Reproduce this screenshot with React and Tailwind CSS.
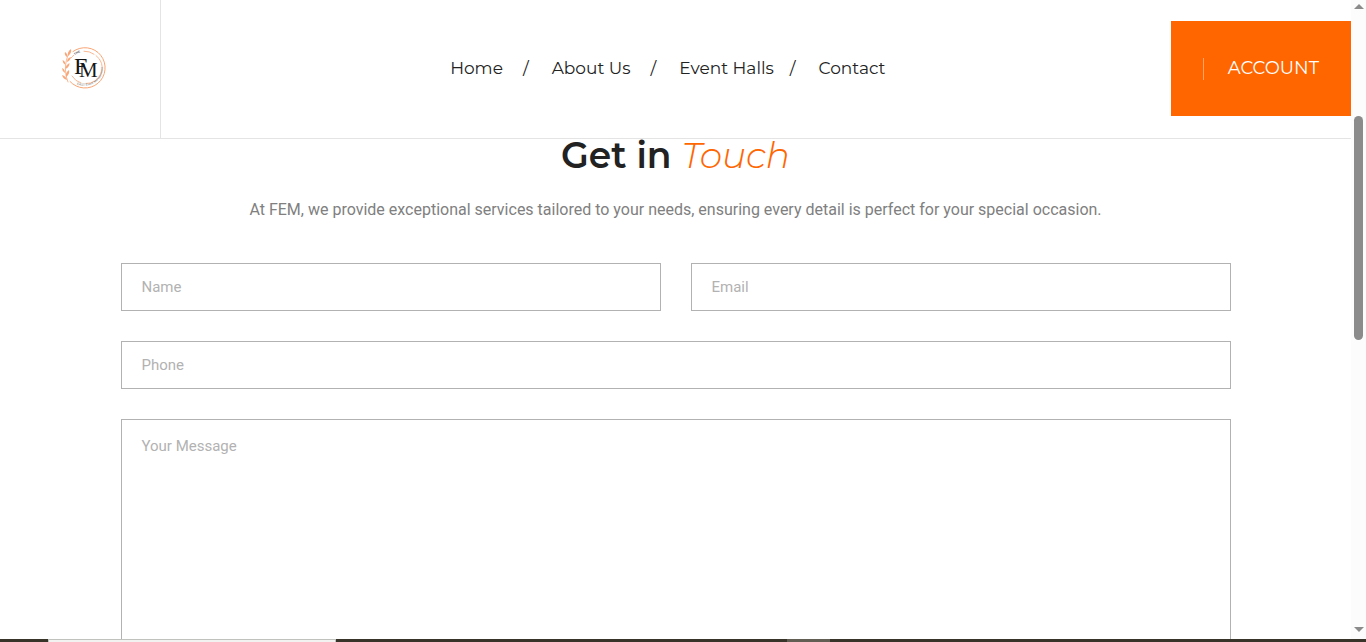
import React from "react";

const navLinks = [
  { label: "Home", href: "#home" },
  { label: "About Us", href: "#about", slash: "ml-5 mr-[23px]" },
  { label: "Event Halls", href: "#halls", slash: "ml-5 mr-[23px]" },
  { label: "Contact", href: "#contact", slash: "ml-4 mr-[23px]" },
];

const fieldClass =
  "block w-full border border-[#b2b2b2] bg-white px-5 text-[15px] text-[#222] placeholder-[#b2b2b2] outline-none focus:border-[#ff6600]";

const Logo = () => (
  <svg viewBox="0 0 48 44" className="w-12 h-11" role="img" aria-label="FEM">
    <defs>
      <path id="ringTop" d="M9 21.500a16.500 16.500 0 0 1 16-16" />
      <path id="ringBottom" d="M15 37.500a18.800 18.800 0 0 0 24-28" />
    </defs>
    <g fill="none" stroke="#f79a63" strokeLinecap="round">
      <path d="M13 5.500a20.200 20.200 0 1 1-3 30" strokeWidth="0.9" />
      <path d="M11 12a16.500 16.500 0 0 1 3-3M24 5.200a16.300 16.300 0 0 1 10 3M36 9.500a15.500 15.500 0 0 1-10 28M21 37a15.500 15.500 0 0 1-9-7" strokeWidth="0.7" />
      <path d="M10 5C6 12 3 24 8 36" strokeWidth="0.7" />
    </g>
    <g fill="#f9a678">
      <path d="M11 3q-4 3-3 7q4-3 3-7zM7 11q-3-2-2-5q3 2 2 5zM7 16q0-4 4-5q-1 4-4 5zM5.500 19q-3-2-3-5q3 1 3 5zM5.500 23q0-4 4-6q0 4-4 6zM5 27q-3-2-3-5q3 1 3 5zM6 31q-1-4 3-7q1 4-3 7zM7 34q-4-1-5-5q4 1 5 5z" />
    </g>
    <text className="font-['Liberation_Sans']" fontSize="3" fontWeight="700" fill="#555">
      <textPath href="#ringTop" startOffset="14">THE</textPath>
    </text>
    <text className="font-['Liberation_Sans']" fontSize="3.200" fill="#777">
      <textPath href="#ringBottom" startOffset="2">EAST Event Management</textPath>
    </text>
    <text x="14" y="28" className="font-['Liberation_Serif']" fontSize="24" fill="#161616">F</text>
    <text x="19" y="31" className="font-['Liberation_Serif']" fontSize="21" fill="#161616">M</text>
  </svg>
);

const Header = () => (
  <header className="flex items-stretch h-[139px] shrink-0 border-b border-[#e4e4e4] bg-white">
    <a href="#home" className="flex items-center justify-center w-[161px] pl-2 pb-0.5 border-r border-[#e4e4e4]">
      <Logo />
    </a>
    <nav className="flex flex-1 items-center justify-center pl-1 font-['Montserrat',sans-serif] text-[17px] text-[#222]">
      {navLinks.map((link) => (
        <React.Fragment key={link.label}>
          {link.slash && <span className={link.slash}>/</span>}
          <a href={link.href} className="hover:text-[#ff6600] transition-colors">
            {link.label}
          </a>
        </React.Fragment>
      ))}
    </nav>
    <div className="flex items-center pb-px">
      <button
        type="button"
        className="flex items-center gap-6 h-[95px] px-8 bg-[#ff6600] font-['Montserrat',sans-serif] text-[18px] text-white"
      >
        <span className="w-px h-[22px] bg-white/40" />
        ACCOUNT
      </button>
    </div>
  </header>
);

const ContactForm = () => (
  <section className="mx-auto w-full max-w-[1110px]">
    <h2 className="text-center font-['Montserrat',sans-serif] text-[36px] leading-8 font-semibold text-[#222]">
      Get in <em className="font-light text-[#ff6600]">Touch</em>
    </h2>
    <p className="mt-6 text-center text-base leading-[30px] text-[#808080]">
      At FEM, we provide exceptional services tailored to your needs, ensuring every detail is perfect for your special occasion.
    </p>
    <form className="grid grid-cols-2 gap-[30px] mt-[38px]">
      <input type="text" name="name" aria-label="Name" placeholder="Name" className={`${fieldClass} h-12`} />
      <input type="email" name="email" aria-label="Email" placeholder="Email" className={`${fieldClass} h-12`} />
      <input type="tel" name="phone" aria-label="Phone" placeholder="Phone" className={`${fieldClass} h-12 col-span-2`} />
      <textarea
        name="message"
        rows={10}
        aria-label="Your Message"
        placeholder="Your Message"
        className={`${fieldClass} col-span-2 py-3 leading-7 resize-none`}
      />
    </form>
  </section>
);

const ScrollBar = () => (
  <div className="flex flex-col items-center w-[15px] shrink-0 py-1 bg-[#fcfcfc]">
    <svg viewBox="0 0 10 5" className="w-[10px] h-[5px]" fill="#8b8b8b">
      <path d="M5 0L10 5H0z" />
    </svg>
    <div className="flex-[107]" />
    <div className="flex-[224] w-[9px] rounded-full bg-[#8b8b8b]" />
    <div className="flex-[287]" />
    <svg viewBox="0 0 10 5" className="w-[10px] h-[5px] mb-[3px]" fill="#8b8b8b">
      <path d="M5 5L0 0H10z" />
    </svg>
  </div>
);

const App = () => {
  return (
    <div className="flex flex-col h-screen overflow-hidden bg-white font-['Roboto',sans-serif]">
      <div className="flex flex-1 min-h-0">
        <div className="flex flex-col flex-1 min-w-0">
          <Header />
          <main className="flex-1 min-h-0">
            <ContactForm />
          </main>
        </div>
        <ScrollBar />
      </div>

      {/* Taskbar edge */}
      <div className="relative flex h-[3px] shrink-0 bg-[#38342a]">
        <div className="w-12" />
        <div className="w-72 border-t border-x border-[#c0c2be] bg-[#f2f3f1]" />
        <div className="flex-[451]" />
        <div className="w-[43px] bg-[#625e53]" />
        <div className="flex-[536]" />
      </div>
    </div>
  );
};

export default App;
